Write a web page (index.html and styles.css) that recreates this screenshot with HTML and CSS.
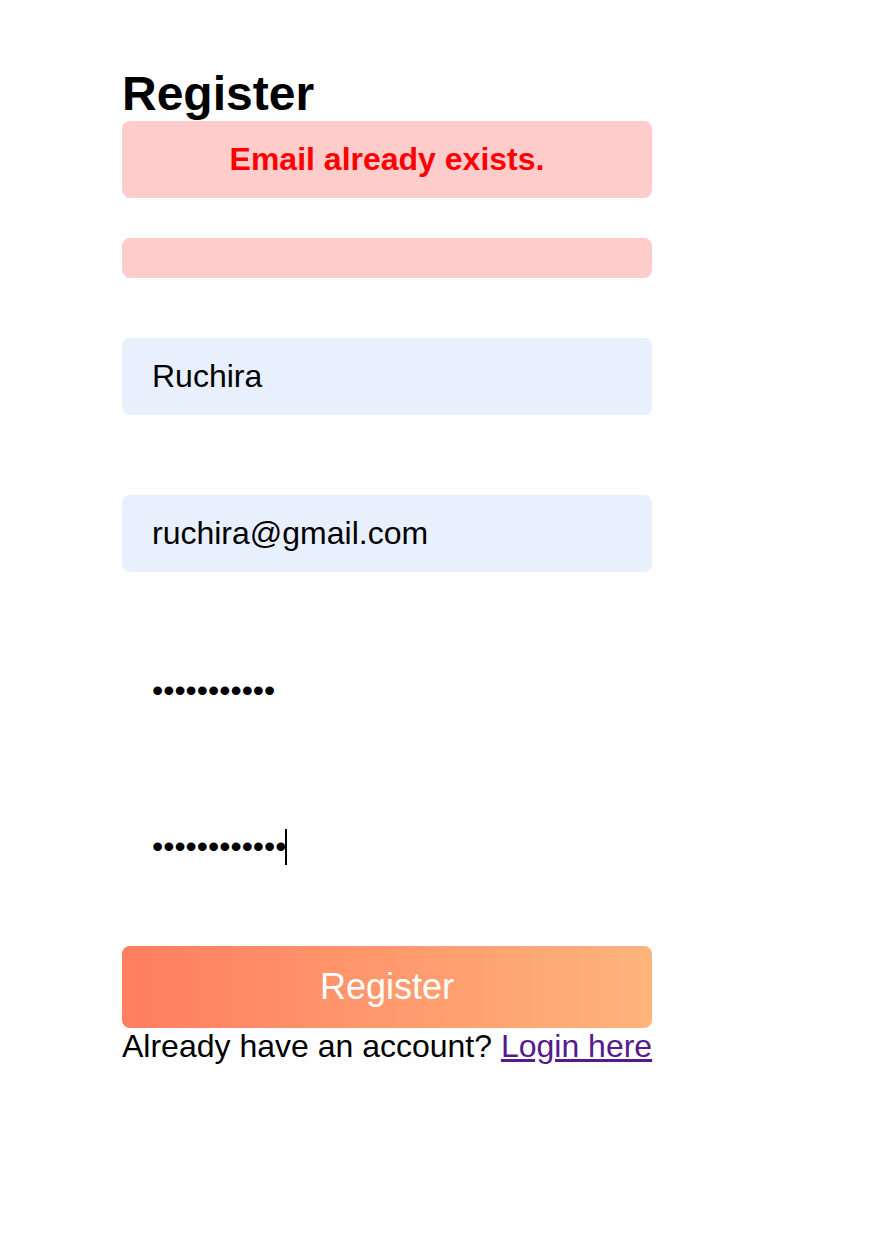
FILE: index.html
```html
<!DOCTYPE html>
<html lang="en">
<head>
<meta charset="utf-8">
<title>Register</title>
<link rel="stylesheet" href="styles.css">
</head>
<body>
<div class="register">
  <h1 class="title">Register</h1>
  <div class="alert">Email already exists.</div>
  <div class="alert alert-empty"></div>
  <form class="form">
    <input class="field autofilled" type="text" value="Ruchira">
    <input class="field autofilled" type="email" value="ruchira@gmail.com">
    <input class="field" type="password" value="ruchira1234">
    <div class="field-wrap">
      <input class="field field-last" type="password" value="ruchira12345">
      <span class="caret"></span>
    </div>
    <button class="submit" type="button">Register</button>
  </form>
  <p class="footer">Already have an account? <a class="login" href="#">Login here</a></p>
</div>
</body>
</html>
```
FILE: styles.css
```css
html, body {
  margin: 0;
  padding: 0;
  background: #ffffff;
}
body {
  font-family: "Liberation Sans", Arial, sans-serif;
  color: #000000;
}
.register {
  width: 530px;
  margin-left: 122px;
  padding-top: 66px;
}
.title {
  margin: 0;
  font-size: 48px;
  font-weight: bold;
  line-height: 55px;
}
.alert {
  background: #ffcccc;
  color: #ff0000;
  font-size: 32px;
  font-weight: bold;
  text-align: center;
  padding: 20px;
  border-radius: 8px;
  margin-bottom: 40px;
}
.alert-empty {
  margin-bottom: 60px;
}
.form {
  display: flex;
  flex-direction: column;
  margin: 0;
}
.field {
  display: block;
  box-sizing: border-box;
  width: 100%;
  height: 76.8px;
  padding: 20px 30px;
  border: none;
  border-radius: 8px;
  background: #ffffff;
  font-family: "Liberation Sans", Arial, sans-serif;
  font-size: 32px;
  color: #000000;
  outline: none;
  margin: 0 0 80px;
}
.field.autofilled {
  background: #e8f0fe;
}
.field-wrap {
  position: relative;
  margin-bottom: 61px;
}
.field-wrap .field-last {
  margin-bottom: 0;
}
.caret {
  position: absolute;
  left: 163px;
  top: 21px;
  width: 2px;
  height: 36px;
  background: #000000;
}
.submit {
  display: block;
  width: 100%;
  height: 81.4px;
  border: none;
  border-radius: 8px;
  background: linear-gradient(to right, #ff7e5f, #feb47b);
  color: #ffffff;
  font-family: "Liberation Sans", Arial, sans-serif;
  font-size: 36px;
  padding: 20px;
  cursor: pointer;
}
.footer {
  margin: 0;
  font-size: 32px;
  line-height: normal;
  white-space: nowrap;
}
.login {
  color: #551a8b;
}
```
